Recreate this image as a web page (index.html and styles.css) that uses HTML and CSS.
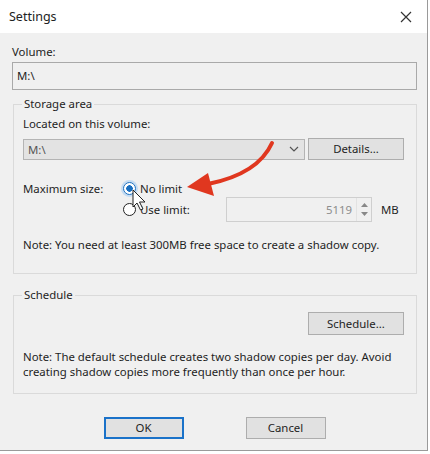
FILE: index.html
```html
<!DOCTYPE html>
<html lang="en">
<head>
    <meta charset="UTF-8">
    <title>Settings</title>
    <link rel="stylesheet" href="styles.css">
</head>
<body>
    <div class="window">
        <div class="titlebar">
            <span class="title">Settings</span>
            <svg class="close" width="12" height="12" viewBox="0 0 12 12">
                <path d="M1 1 L11 11 M11 1 L1 11" stroke="#333" stroke-width="1.2" fill="none"/>
            </svg>
        </div>
        <div class="content">
            <div class="label">Volume:</div>
            <div class="textbox">M:\</div>

            <fieldset class="group storage">
                <legend>Storage area</legend>
                <div class="label">Located on this volume:</div>
                <div class="row">
                    <div class="combo">
                        <span>M:\</span>
                        <svg width="10" height="6" viewBox="0 0 10 6">
                            <path d="M1 1 L5 5 L9 1" stroke="#555" stroke-width="1.2" fill="none"/>
                        </svg>
                    </div>
                    <div class="button">Details...</div>
                </div>
                <div class="size-grid">
                    <div class="label">Maximum size:</div>
                    <div class="radio-item">
                        <span class="radio checked"></span>
                        <span>No limit</span>
                    </div>
                    <div></div>
                    <div></div>
                    <div></div>
                    <div class="radio-item">
                        <span class="radio"></span>
                        <span>Use limit:</span>
                    </div>
                    <div class="spinner">
                        <span class="value">5119</span>
                        <span class="spin">
                            <svg width="7" height="4" viewBox="0 0 7 4"><path d="M0 4 L3.5 0 L7 4 Z" fill="#888"/></svg>
                            <svg width="7" height="4" viewBox="0 0 7 4"><path d="M0 0 L3.5 4 L7 0 Z" fill="#888"/></svg>
                        </span>
                    </div>
                    <div class="unit">MB</div>
                </div>
                <div class="note">Note: You need at least 300MB free space to create a shadow copy.</div>
            </fieldset>

            <fieldset class="group schedule">
                <legend>Schedule</legend>
                <div class="row end">
                    <div class="button">Schedule...</div>
                </div>
                <div class="note two-line">Note: The default schedule creates two shadow copies per day. Avoid creating shadow copies more frequently than once per hour.</div>
            </fieldset>

            <div class="buttons">
                <div class="button default">OK</div>
                <div class="button">Cancel</div>
            </div>
        </div>

        <!-- annotation arrow and mouse pointer -->
        <svg class="overlay" width="430" height="454" viewBox="0 0 430 454">
            <path d="M272 143 Q258 174 208 184" stroke="#e0371f" stroke-width="4" fill="none" stroke-linecap="round"/>
            <path d="M187 187 L208 173 L214 196 Z" fill="#e0371f"/>
            <path d="M133 190 L133 207 L137 203 L140.5 210 L143 209 L139.5 202 L145 202 Z" fill="#fff" stroke="#222" stroke-width="1" stroke-linejoin="round"/>
        </svg>
    </div>
</body>
</html>
```

FILE: styles.css
```css
body {
    margin: 0;
    background: #fff;
    font-family: "Noto Sans", "Open Sans", sans-serif;
    font-size: 11.4px;
    color: #1e1e1e;
}
.window {
    position: relative;
    width: 427px;
    height: 450px;
    background: #f0f0f0;
    border-right: 1px solid #9a9a9a;
    border-bottom: 1px solid #9a9a9a;
    overflow: hidden;
}
.titlebar {
    height: 33px;
    background: #fff;
    display: flex;
    align-items: center;
    justify-content: space-between;
    padding: 0 15px 0 9px;
}
.title {
    font-size: 12.5px;
    color: #222;
}
.content {
    padding: 11px 10px 0 12px;
}
.label {
    line-height: 16px;
    height: 16px;
}
.textbox {
    margin-top: 2px;
    height: 26px;
    line-height: 26px;
    border: 1px solid #a9a9a9;
    background: #f0f0f0;
    padding-left: 4px;
}
.group {
    margin: 6px 0 0 1px;
    padding: 4px 12px 0 9px;
    border: 1px solid #dadada;
    min-width: 0;
}
.group legend {
    padding: 0 2px;
    margin-left: -1px;
    line-height: 16px;
}
.row {
    display: flex;
    justify-content: space-between;
    align-items: center;
    margin-top: 6px;
}
.row.end {
    justify-content: flex-end;
    margin-top: 5px;
}
.combo {
    width: 271px;
    height: 19px;
    border: 1px solid #b4b4b4;
    background: #e3e3e3;
    display: flex;
    align-items: center;
    justify-content: space-between;
    padding: 0 5px 0 4px;
    box-sizing: content-box;
}
.combo span {
    color: #555;
}
.button {
    width: 94px;
    height: 20px;
    line-height: 20px;
    text-align: center;
    border: 1px solid #adadad;
    background: #e1e1e1;
}
.schedule .button {
    height: 21px;
    line-height: 21px;
}
.size-grid {
    display: grid;
    grid-template-columns: 99px 104px 146px auto;
    grid-template-rows: 17px 25px;
    align-items: center;
    margin-top: 20px;
}
.radio-item {
    display: flex;
    align-items: center;
    gap: 4px;
}
.radio {
    width: 11px;
    height: 11px;
    border: 1px solid #222;
    border-radius: 50%;
    background: #fff;
    margin-left: 1px;
}
.radio.checked {
    border-color: #1a6fc0;
    box-shadow: 0 0 0 2px #c4dcf3;
    background: radial-gradient(circle, #1a6fc0 0 3px, #fff 3.5px);
}
.spinner {
    height: 23px;
    border: 1px solid #cfcfcf;
    background: #f0f0f0;
    display: flex;
    align-items: center;
    justify-content: flex-end;
}
.spinner .value {
    color: #8d8d8d;
    margin-right: 4px;
}
.spin {
    width: 15px;
    height: 23px;
    border-left: 1px solid #e2e2e2;
    display: flex;
    flex-direction: column;
    align-items: center;
    justify-content: space-around;
    padding: 2px 0;
    box-sizing: border-box;
}
.unit {
    padding-left: 9px;
}
.note {
    margin-top: 15px;
    line-height: 16px;
}
.storage {
    padding-bottom: 20px;
}
.schedule {
    margin-top: 13px;
    padding-bottom: 14px;
}
.note.two-line {
    margin-top: 14px;
    line-height: 15px;
}
.buttons {
    display: flex;
    justify-content: center;
    gap: 62px;
    margin-top: 23px;
}
.buttons .button {
    width: 78px;
    height: 20px;
    line-height: 20px;
}
.buttons .button.default {
    border: 1px solid #1a72c9;
    box-shadow: inset 0 0 0 1px #1a72c9;
}
.overlay {
    position: absolute;
    left: 0;
    top: 0;
    pointer-events: none;
}
```
